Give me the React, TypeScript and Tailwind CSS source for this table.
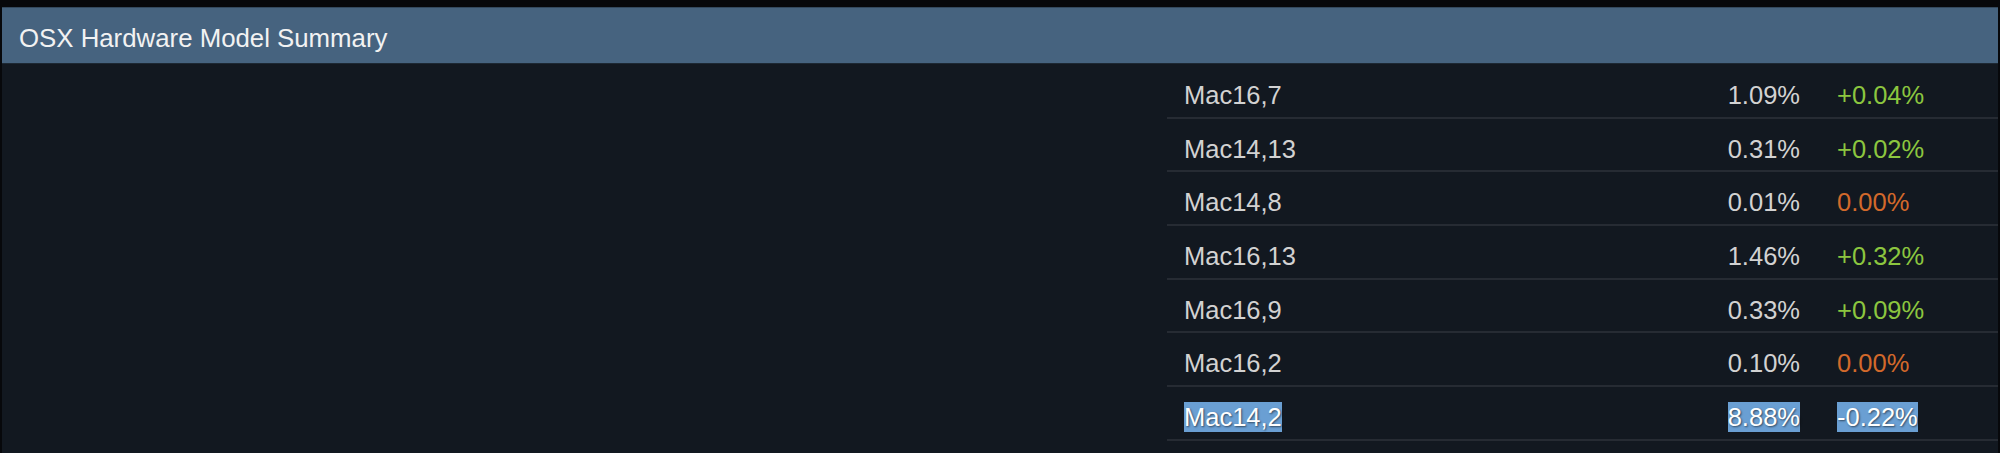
import React from 'react';

type Row = {
  model: string;
  pct: string;
  change: string;
  selected?: boolean;
};

const rows: Row[] = [
  { model: 'Mac16,7', pct: '1.09%', change: '+0.04%' },
  { model: 'Mac14,13', pct: '0.31%', change: '+0.02%' },
  { model: 'Mac14,8', pct: '0.01%', change: '0.00%' },
  { model: 'Mac16,13', pct: '1.46%', change: '+0.32%' },
  { model: 'Mac16,9', pct: '0.33%', change: '+0.09%' },
  { model: 'Mac16,2', pct: '0.10%', change: '0.00%' },
  { model: 'Mac14,2', pct: '8.88%', change: '-0.22%', selected: true },
];

const changeColor = (c: string) => {
  if (c.startsWith('+')) return 'text-[#8cc63f]';
  if (c.startsWith('-')) return 'text-[#d4d4d4]';
  return 'text-[#d2692b]';
};

const Cell: React.FC<{ text: string; selected?: boolean; className?: string }> = ({ text, selected, className }) => {
  if (selected) {
    return (
      <span className="inline-block bg-[#6a9fd3] text-white leading-[30px] [text-shadow:1px_1px_2px_rgba(0,0,0,0.55)]">
        {text}
      </span>
    );
  }
  return <span className={className}>{text}</span>;
};

const App: React.FC = () => {
  return (
    <div className="h-[453px] w-full bg-[#07080b] pt-[7px] px-[2px] flex flex-col font-['Liberation_Sans',Arial,sans-serif]">
      <div className="h-[57px] bg-[#46637f] border-t border-[#34495e] border-b border-b-[#1d2833] pl-[17px] pt-[6px] flex items-center">
        <h2 className="text-[25.8px] text-[#f2f2f2] leading-none">OSX Hardware Model Summary</h2>
      </div>

      <div className="flex-1 bg-[#121820] flex pt-[1px]">
        <div className="flex-1" />
        <div className="w-[831px]">
          {rows.map((r) => (
            <div
              key={r.model}
              className="h-[53.67px] border-b-2 border-[#262b33] flex pl-[17px] pt-[15px] text-[25.5px] leading-[30px] text-[#d2d2d2]"
            >
              <div className="w-[496px]">
                <Cell text={r.model} selected={r.selected} />
              </div>
              <div className="w-[120px] text-right">
                <Cell text={r.pct} selected={r.selected} />
              </div>
              <div className="ml-[37px]">
                <Cell text={r.change} selected={r.selected} className={changeColor(r.change)} />
              </div>
            </div>
          ))}
        </div>
      </div>
    </div>
  );
};

export default App;
